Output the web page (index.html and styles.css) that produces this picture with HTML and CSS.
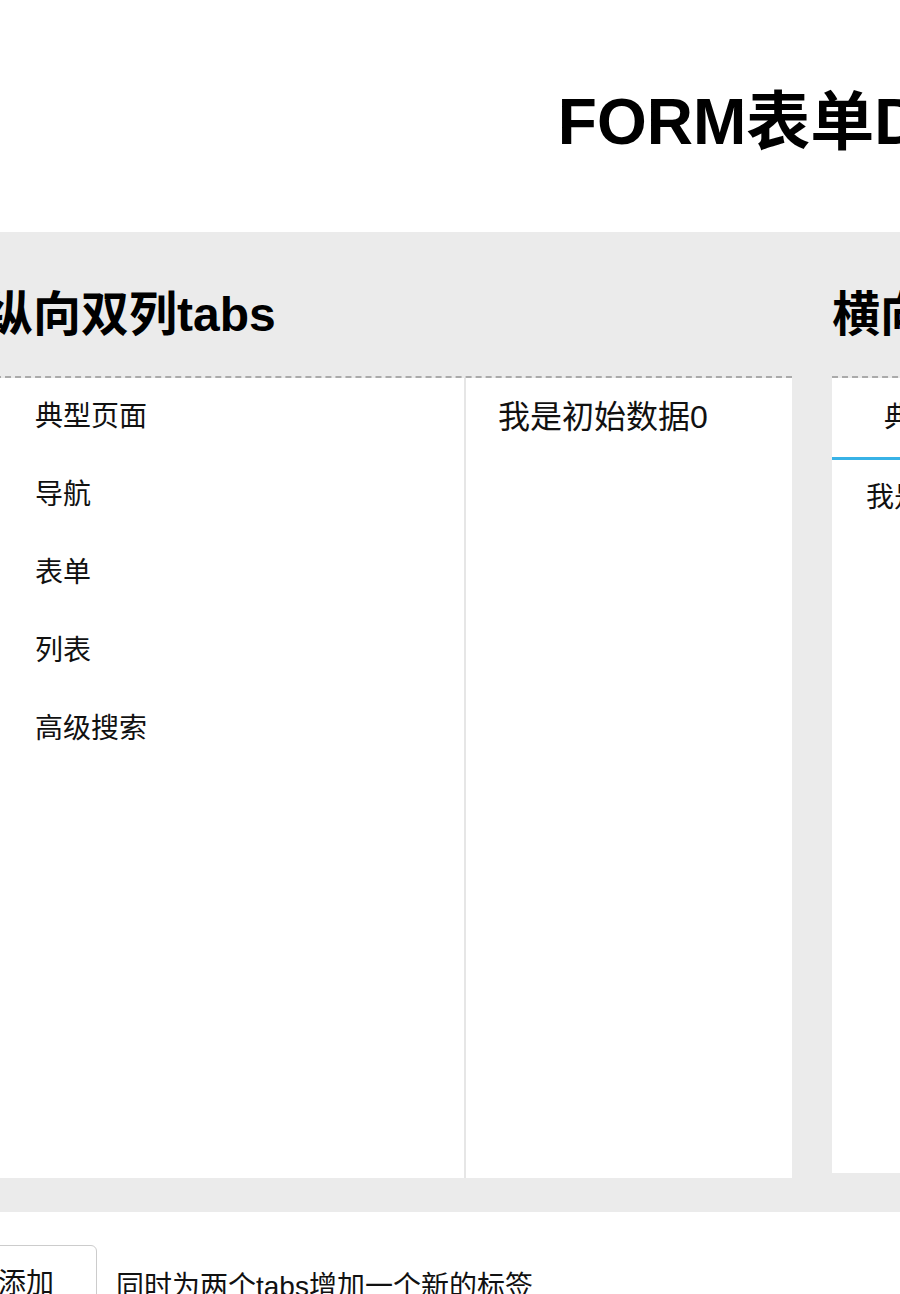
FILE: index.html
```html
<!DOCTYPE html>
<html lang="zh-CN">
<head>
<meta charset="utf-8">
<title>FORM表单DEMO</title>
<link rel="stylesheet" href="styles.css">
</head>
<body>
<div class="page">
  <header class="page-header">
    <h1 class="page-title">FORM表单DEMO</h1>
  </header>

  <section class="board">
    <div class="board-inner">
      <div class="demo">
        <h2 class="demo-title">纵向双列tabs</h2>
        <div class="panel panel-vertical">
          <ul class="side-tabs">
            <li class="side-tab is-active">典型页面</li>
            <li class="side-tab">导航</li>
            <li class="side-tab">表单</li>
            <li class="side-tab">列表</li>
            <li class="side-tab">高级搜索</li>
          </ul>
          <div class="side-content">我是初始数据0</div>
        </div>
      </div>

      <div class="demo">
        <h2 class="demo-title">横向tabs</h2>
        <div class="panel panel-horizontal">
          <ul class="top-tabs">
            <li class="top-tab is-active">典型页面</li>
            <li class="top-tab">导航</li>
            <li class="top-tab">表单</li>
            <li class="top-tab">列表</li>
            <li class="top-tab">高级搜索</li>
          </ul>
          <div class="top-content">我是初始数据0</div>
        </div>
      </div>
    </div>
  </section>

  <div class="actions">
    <button class="btn" type="button">添加</button>
    <span class="hint">同时为两个tabs增加一个新的标签</span>
  </div>
</div>
</body>
</html>
```

FILE: styles.css
```css
* {
  box-sizing: border-box;
}

html {
  overflow: hidden;
}

body {
  margin: 0;
  background: #fff;
  color: #000;
  font-family: "Liberation Sans", "Noto Sans CJK SC", sans-serif;
}

.page {
  width: 1654px;
  margin-left: -15px;
}

/* header */
.page-header {
  padding: 85px 0 73px;
  text-align: center;
}

.page-title {
  margin: 0;
  font-size: 64px;
  line-height: 74px;
  font-weight: bold;
}

/* gray board with the two demos */
.board {
  background: #ebebeb;
  padding-bottom: 34px;
}

.board-inner {
  display: grid;
  grid-template-columns: 807px 807px;
  column-gap: 40px;
  align-items: start;
}

.demo-title {
  margin: 0;
  padding: 55px 0 33px;
  font-size: 48px;
  line-height: 56px;
  font-weight: bold;
  white-space: nowrap;
  border-bottom: 2px dashed #aaa;
}

.panel {
  background: #fff;
}

/* vertical two-column tabs */
.panel-vertical {
  display: flex;
  height: 800px;
}

.side-tabs {
  list-style: none;
  margin: 0;
  padding: 0 0 0 50px;
  width: 481px;
  flex: none;
  border-right: 2px solid #e6e6e6;
}

.side-tab {
  font-size: 28px;
  line-height: 78px;
  color: #111;
}

.side-content {
  flex: 1;
  padding: 15px 32px;
  font-size: 32px;
  line-height: 48px;
  color: #111;
}

/* horizontal tabs */
.panel-horizontal {
  height: 795px;
}

.top-tabs {
  display: flex;
  list-style: none;
  margin: 0;
  padding: 0;
}

.top-tab {
  padding: 0 52px;
  font-size: 28px;
  line-height: 79px;
  white-space: nowrap;
  color: #111;
  border-bottom: 3px solid transparent;
}

.top-tab.is-active {
  border-bottom-color: #38b2e6;
}

.top-content {
  padding: 14px 34px;
  font-size: 28px;
  line-height: 48px;
  color: #111;
}

/* bottom actions */
.actions {
  display: flex;
  align-items: center;
  margin-left: -30px;
  padding-top: 33px;
}

.btn {
  font-family: inherit;
  font-size: 28px;
  line-height: 76px;
  padding: 0 42px;
  color: #111;
  background: #fff;
  border: 1px solid #ccc;
  border-radius: 6px;
}

.hint {
  margin-left: 19px;
  font-size: 28px;
  color: #111;
}
```
